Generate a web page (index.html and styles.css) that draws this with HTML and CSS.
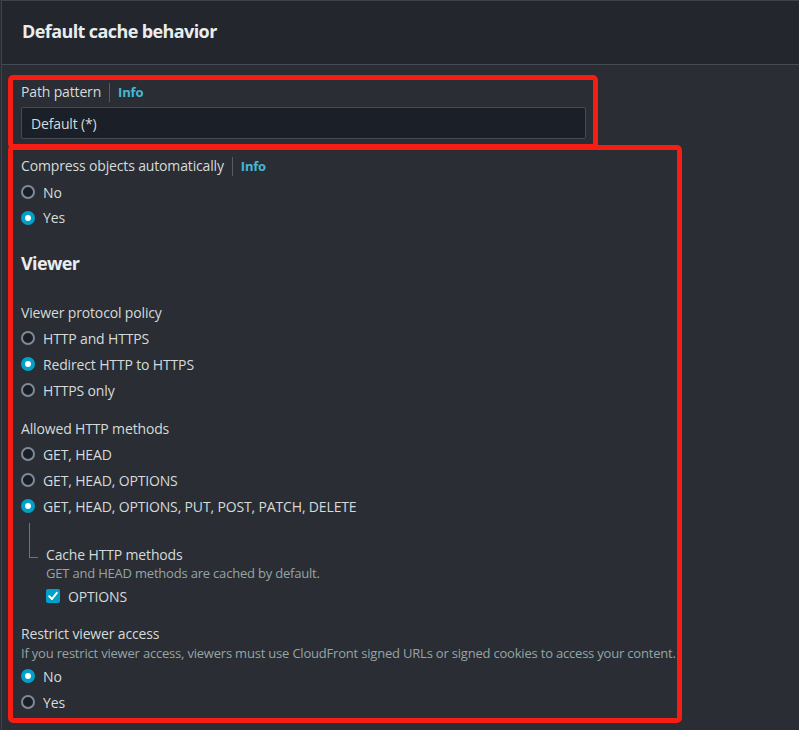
FILE: index.html
```html
<!DOCTYPE html>
<html lang="en">
<head>
<meta charset="utf-8">
<title>Default cache behavior</title>
<link rel="stylesheet" href="styles.css">
</head>
<body>
<div class="panel">
  <header class="panel-header">
    <h2 class="panel-title">Default cache behavior</h2>
  </header>
  <div class="panel-body">
    <div class="field">
      <div class="label-row"><span class="label">Path pattern</span><span class="sep"></span><a class="info">Info</a></div>
      <div class="input">Default (*)</div>
    </div>

    <div class="field compress">
      <div class="label-row"><span class="label">Compress objects automatically</span><span class="sep"></span><a class="info">Info</a></div>
      <div class="radios">
        <label class="radio"><span class="dot"></span>No</label>
        <label class="radio"><span class="dot on"></span>Yes</label>
      </div>
    </div>

    <h3 class="section-title">Viewer</h3>

    <div class="field">
      <div class="label-row"><span class="label">Viewer protocol policy</span></div>
      <div class="radios">
        <label class="radio"><span class="dot"></span>HTTP and HTTPS</label>
        <label class="radio"><span class="dot on"></span>Redirect HTTP to HTTPS</label>
        <label class="radio"><span class="dot"></span>HTTPS only</label>
      </div>
    </div>

    <div class="field methods">
      <div class="label-row"><span class="label">Allowed HTTP methods</span></div>
      <div class="radios">
        <label class="radio"><span class="dot"></span>GET, HEAD</label>
        <label class="radio"><span class="dot"></span>GET, HEAD, OPTIONS</label>
        <label class="radio"><span class="dot on"></span>GET, HEAD, OPTIONS, PUT, POST, PATCH, DELETE</label>
      </div>
      <div class="sub">
        <div class="connector"></div>
        <div class="sub-body">
          <div class="label">Cache HTTP methods</div>
          <div class="desc">GET and HEAD methods are cached by default.</div>
          <label class="check"><span class="box"><svg viewBox="0 0 14 14" width="14" height="14"><path d="M3.2 7.3 L6 10 L10.8 3.8" fill="none" stroke="#fff" stroke-width="2" stroke-linecap="round" stroke-linejoin="round"/></svg></span>OPTIONS</label>
        </div>
      </div>
    </div>

    <div class="field restrict">
      <div class="label-row"><span class="label">Restrict viewer access</span></div>
      <div class="desc">If you restrict viewer access, viewers must use CloudFront signed URLs or signed cookies to access your content.</div>
      <div class="radios">
        <label class="radio"><span class="dot on"></span>No</label>
        <label class="radio"><span class="dot"></span>Yes</label>
      </div>
    </div>
  </div>
</div>
<div class="mark mark-1"></div>
<div class="mark mark-2"></div>
</body>
</html>
```

FILE: styles.css
```css
* { box-sizing: border-box; }
html, body { margin: 0; padding: 0; }
body {
  background: #2a2d33;
  font-family: "Open Sans", "Noto Sans", sans-serif;
  font-size: 14px;
  letter-spacing: -0.15px;
  color: #d5dbdb;
  width: 799px;
  height: 730px;
  overflow: hidden;
  position: relative;
}
.panel {
  margin-left: 1px;
  border-left: 1px solid #3e434b;
  border-top: 1px solid #3e434b;
  height: 730px;
}
.panel-header {
  height: 64px;
  background: #23262d;
  border-bottom: 1px solid #454b54;
  display: flex;
  align-items: center;
  padding-left: 20px;
}
.panel-title {
  margin: 0;
  font-size: 18px;
  font-weight: 700;
  letter-spacing: -0.6px;
  color: #eaeded;
  line-height: 24px;
  padding-bottom: 4px;
}
.panel-body {
  padding: 17px 0 0 19px;
}
.field { display: flex; flex-direction: column; }
.label-row { display: flex; align-items: center; height: 20px; }
.label { line-height: 20px; color: #d5dbdb; }
.sep { width: 1px; height: 19px; background: #545b64; margin: 0 8px 0 8px; }
.info { color: #44b9d6; font-weight: 700; font-size: 13px; letter-spacing: -0.2px; }
.input {
  margin-top: 5px;
  width: 565px;
  height: 32px;
  background: #1b1f27;
  border: 1px solid #454b54;
  border-radius: 2px;
  padding-left: 9px;
  display: flex;
  align-items: center;
  color: #d5dbdb;
}
.compress { margin-top: 17px; }
.compress .radios { margin-top: 3px; }
.compress .radio + .radio { height: 25px; }
.radios { display: flex; flex-direction: column; margin-top: 3px; }
.radio { display: flex; align-items: center; height: 26px; }
.dot {
  width: 14px; height: 14px;
  border-radius: 50%;
  border: 2px solid #7f8a96;
  background: #1a1f27;
  margin-right: 8px;
  flex: none;
}
.dot.on {
  border: 4.5px solid #00a1c9;
  background: #fff;
}
.section-title {
  margin: 22px 0 0;
  font-size: 18px;
  font-weight: 700;
  letter-spacing: -0.6px;
  line-height: 24px;
  color: #eaeded;
  position: relative;
  top: -1px;
}
.section-title + .field { margin-top: 26px; }
.section-title + .field .label-row { position: relative; top: 1px; }
.methods { margin-top: 15px; }
.methods > .label-row { position: relative; top: 1px; }
.sub { display: flex; }
.connector {
  width: 9px;
  height: 35px;
  margin: 4px 0 0 8px;
  border-left: 1px solid #6b737d;
  border-bottom: 1px solid #6b737d;
  flex: none;
}
.sub-body { padding: 26px 0 0 8px; display: flex; flex-direction: column; }
.desc { color: #95a5a6; font-size: 13px; line-height: 19px; letter-spacing: -0.2px; }
.sub-body .desc { line-height: 17px; }
.check { display: flex; align-items: center; height: 24px; margin-top: 2px; }
.box {
  width: 14px; height: 14px;
  background: #00a1c9;
  border-radius: 2px;
  margin-right: 8px;
  display: flex;
}
.restrict { margin-top: 16px; }
.restrict .desc { line-height: 18px; }
.restrict .radios { margin-top: 1px; }
.mark {
  position: absolute;
  border: 5px solid #f81d13;
  border-radius: 5px;
  pointer-events: none;
}
.mark-1 { left: 8px; top: 75px; width: 590px; height: 74px; }
.mark-2 { left: 8px; top: 145px; width: 674px; height: 578px; }
```
